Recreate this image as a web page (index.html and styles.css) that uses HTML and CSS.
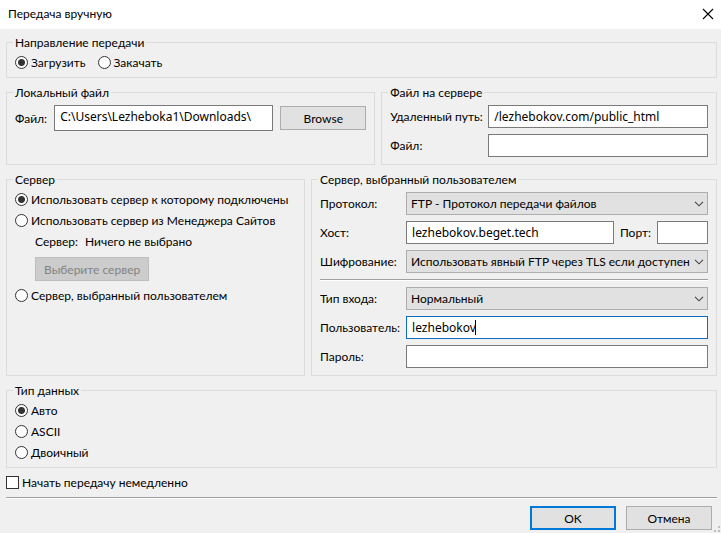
FILE: index.html
```html
<!DOCTYPE html>
<html lang="ru">
<head>
    <meta charset="UTF-8">
    <meta name="viewport" content="width=device-width, initial-scale=1.0">
    <title>Передача вручную</title>
    <link rel="stylesheet" href="styles.css">
</head>
<body>
    <header class="titlebar">
        <h1>Передача вручную</h1>
        <button type="button" class="close" aria-label="Закрыть">
            <svg width="12" height="12" viewBox="0 0 12 12"><path d="M1 1l10 10M11 1L1 11" stroke="#000" stroke-width="1.1" fill="none"/></svg>
        </button>
    </header>
    <form class="dialog">
        <fieldset class="choices">
            <legend>Направление передачи</legend>
            <div class="inline">
                <label class="option"><input type="radio" name="direction" checked>Загрузить</label>
                <label class="option"><input type="radio" name="direction">Закачать</label>
            </div>
        </fieldset>

        <div class="columns files">
            <fieldset>
                <legend>Локальный файл</legend>
                <div class="local-file">
                    <label for="local-file">Файл:</label>
                    <input type="text" id="local-file" class="tall" value="C:\Users\Lezheboka1\Downloads\">
                    <button type="button">Browse</button>
                </div>
            </fieldset>
            <fieldset>
                <legend>Файл на сервере</legend>
                <div class="fields remote">
                    <label for="remote-path">Удаленный путь:</label>
                    <input type="text" id="remote-path" value="/lezhebokov.com/public_html">
                    <label for="remote-file">Файл:</label>
                    <input type="text" id="remote-file">
                </div>
            </fieldset>
        </div>

        <div class="columns servers">
            <fieldset class="choices">
                <legend>Сервер</legend>
                <label class="option"><input type="radio" name="server" checked>Использовать сервер к которому подключены</label>
                <label class="option"><input type="radio" name="server">Использовать сервер из Менеджера Сайтов</label>
                <div class="site">
                    <p><span>Сервер:</span><span>Ничего не выбрано</span></p>
                    <button type="button" disabled>Выберите сервер</button>
                </div>
                <label class="option"><input type="radio" name="server">Сервер, выбранный пользователем</label>
            </fieldset>
            <fieldset>
                <legend>Сервер, выбранный пользователем</legend>
                <div class="fields custom">
                    <label for="protocol">Протокол:</label>
                    <select id="protocol"><option>FTP - Протокол передачи файлов</option></select>
                    <label for="host">Хост:</label>
                    <div class="host">
                        <input type="text" id="host" value="lezhebokov.beget.tech">
                        <label for="port">Порт:</label>
                        <input type="text" id="port" class="port">
                    </div>
                    <label for="encryption">Шифрование:</label>
                    <select id="encryption"><option>Использовать явный FTP через TLS если доступен</option></select>
                    <hr>
                    <label for="logon">Тип входа:</label>
                    <select id="logon"><option>Нормальный</option></select>
                    <label for="user">Пользователь:</label>
                    <div class="active">
                        <input type="text" id="user" value="lezhebokov">
                        <span class="caret"></span>
                    </div>
                    <label for="password">Пароль:</label>
                    <input type="password" id="password">
                </div>
            </fieldset>
        </div>

        <fieldset class="choices">
            <legend>Тип данных</legend>
            <label class="option"><input type="radio" name="type" checked>Авто</label>
            <label class="option"><input type="radio" name="type">ASCII</label>
            <label class="option"><input type="radio" name="type">Двоичный</label>
        </fieldset>

        <div class="start">
            <label class="option"><input type="checkbox">Начать передачу немедленно</label>
            <hr>
        </div>

        <div class="buttons">
            <button type="submit" class="default">OK</button>
            <button type="button">Отмена</button>
        </div>
    </form>
    <svg class="grip" width="6" height="6" viewBox="0 0 6 6"><path d="M4 0h2v2H4zM4 4h2v2H4zM0 4h2v2H0z" fill="#bfbfbf"/></svg>
</body>
</html>
```
FILE: styles.css
```css
* {
    box-sizing: border-box;
}
body {
    margin: 0;
    min-height: 100vh;
    background-color: #f0f0f0;
    color: #000;
    font: 12px/15px Lato, "Noto Sans", sans-serif;
}
.titlebar {
    display: flex;
    justify-content: space-between;
    align-items: center;
    height: 29px;
    padding: 0 7px 2px 8px;
    background-color: #fff;
}
.titlebar h1 {
    margin: 0;
    font-size: 12px;
    font-weight: 400;
}
.titlebar .close {
    display: flex;
    width: 12px;
    min-width: 0;
    height: 12px;
    padding: 0;
    border: none;
    background: none;
}
.dialog {
    display: flex;
    flex-direction: column;
    gap: 7px;
    padding: 6px 4px 3px 6px;
}
fieldset {
    min-width: 0;
    margin: 0;
    padding: 5px 8px 7px;
    border: 1px solid #dcdcdc;
}
fieldset.choices {
    padding: 2px 8px 4px;
}
legend {
    margin-left: -2px;
    padding: 0 2px;
}
.columns {
    display: grid;
    gap: 6px;
}
.files {
    grid-template-columns: 11fr 10fr;
}
.servers {
    grid-template-columns: 14fr 19fr;
}
.inline {
    display: flex;
    gap: 12px;
}
.option {
    display: flex;
    align-items: center;
    gap: 3px;
    height: 21px;
    white-space: nowrap;
}
input,
select,
button {
    margin: 0;
    border-radius: 0;
    color: #000;
    font: inherit;
}
input[type="radio"],
input[type="checkbox"] {
    appearance: none;
    flex: none;
    width: 13px;
    height: 13px;
    border: 1px solid #333;
    background-color: #fff;
}
input[type="radio"] {
    border-radius: 50%;
}
input[type="radio"]:checked {
    background-image: radial-gradient(circle, #333 3px, transparent 4px);
}
input[type="text"],
input[type="password"] {
    width: 100%;
    min-width: 0;
    height: 23px;
    padding: 0 5px;
    border: 1px solid #7a7a7a;
    background-color: #fff;
    font-family: "Noto Sans", sans-serif;
    outline: none;
}
input[type="text"].tall {
    height: 26px;
    padding-bottom: 4px;
}
select {
    appearance: none;
    width: 100%;
    height: 23px;
    padding: 0 16px 0 4px;
    border: 1px solid #adadad;
    background: #e1e1e1 url('data:image/svg+xml,<svg xmlns="http://www.w3.org/2000/svg" width="10" height="6"><path d="M1 .8l4 4 4-4" fill="none" stroke="%23444" stroke-width="1.1"/></svg>') no-repeat right 3px center;
}
button {
    min-width: 86px;
    height: 24px;
    padding: 0 8px;
    border: 1px solid #adadad;
    background-color: #e1e1e1;
}
button:disabled {
    border-color: #bfbfbf;
    background-color: #ccc;
    color: #838383;
}
button.default {
    border: 2px solid #0078d7;
}
hr {
    width: 100%;
    height: 2px;
    margin: 0;
    border: none;
    border-top: 1px solid #a0a0a0;
    background-color: #fff;
}
.local-file {
    display: flex;
    align-items: center;
    gap: 7px;
}
.local-file button {
    flex: none;
}
.fields {
    display: grid;
    gap: 6px 0;
    align-items: center;
    white-space: nowrap;
}
.remote {
    grid-template-columns: 98px 1fr;
}
.custom {
    grid-template-columns: 86px 1fr;
}
.custom hr {
    grid-column: 1 / -1;
}
.host {
    display: flex;
    align-items: center;
    gap: 6px;
}
.host .port {
    flex: none;
    width: 51px;
}
.active {
    position: relative;
    display: flex;
}
.active input[type="text"] {
    border-color: #0f6cbd;
}
/* text cursor after the user name */
.caret {
    position: absolute;
    top: 4px;
    left: 69px;
    width: 1px;
    height: 15px;
    background-color: #000;
}
.site {
    padding: 0 0 4px 20px;
}
.site p {
    display: flex;
    align-items: center;
    gap: 7px;
    height: 21px;
    margin: 0 0 5px;
}
.site button {
    min-width: 114px;
}
.start {
    display: flex;
    flex-direction: column;
    gap: 4px;
    margin-top: -3px;
}
.buttons {
    display: flex;
    justify-content: flex-end;
    gap: 10px;
    padding-right: 5px;
}
.grip {
    position: absolute;
    right: 1px;
    bottom: 1px;
}
```
